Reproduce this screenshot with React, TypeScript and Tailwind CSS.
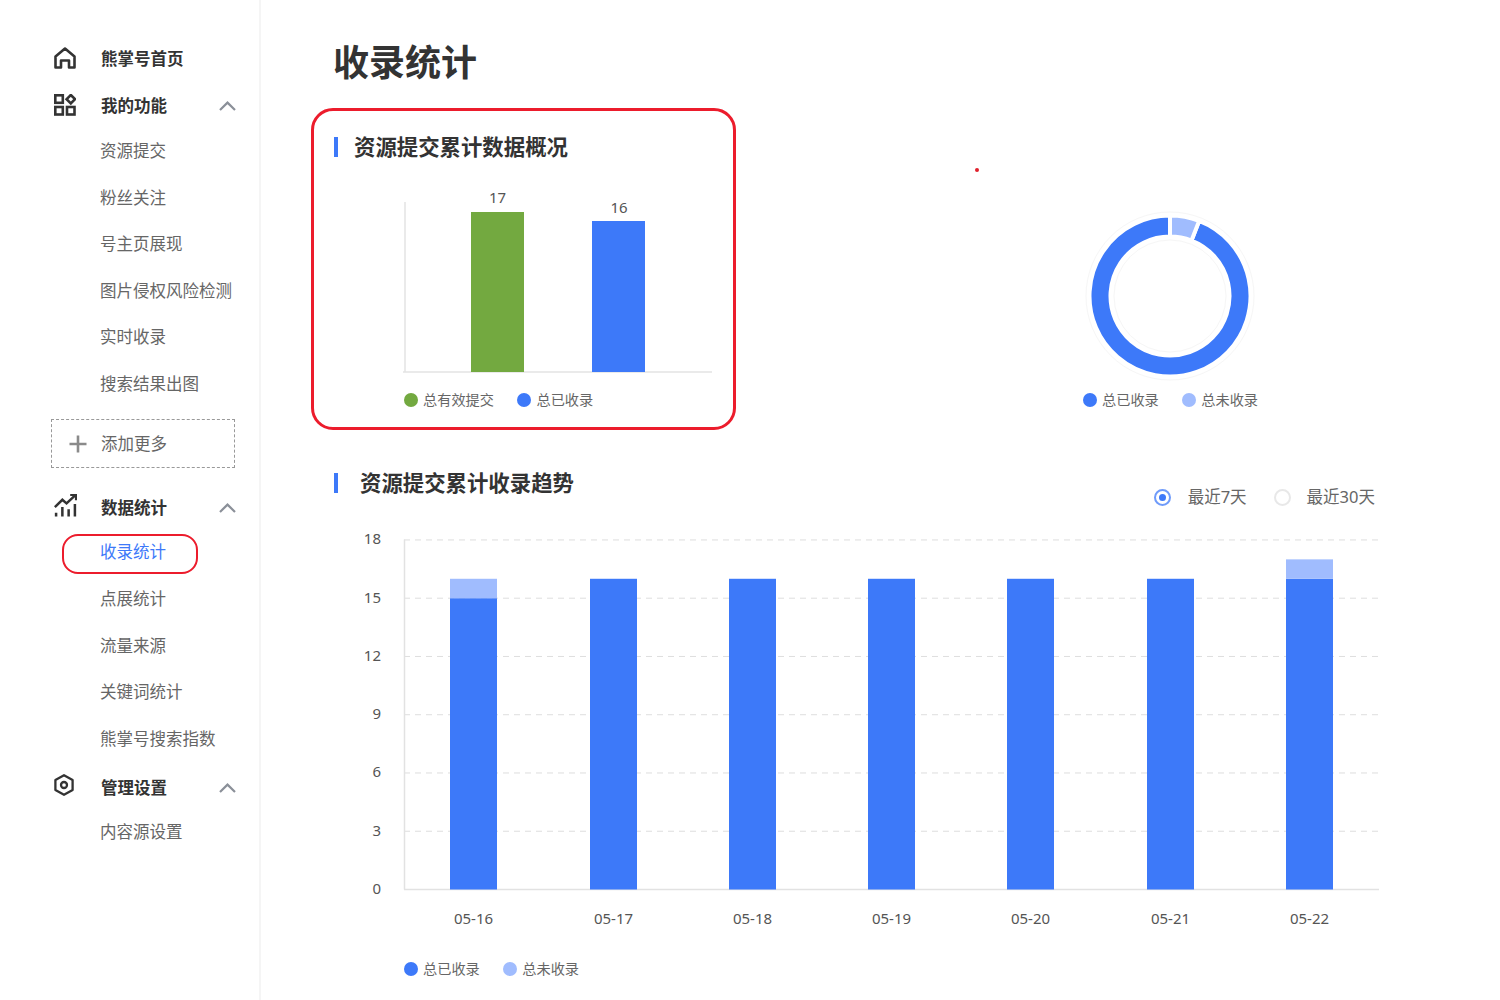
import React from 'react';

const BLUE = '#3d79f9';
const PALE = '#a0bcfe';
const GREEN = '#73a940';

const HomeIcon = () => (
    <svg width="22" height="22" viewBox="0 0 22 22" fill="none" stroke="#333" strokeWidth="2.600" strokeLinejoin="round">
        <path d="M1.500 9.500 11 1.500l9.500 8V20.500h-5.500v-7H7v7H1.500z" />
    </svg>
);

const GridIcon = () => (
    <svg width="22" height="22" viewBox="0 0 22 22" fill="none" stroke="#333" strokeWidth="2.600">
        <rect x="1.300" y="1.300" width="7.500" height="7.500" />
        <rect x="1.300" y="13" width="7.500" height="7.500" />
        <rect x="13" y="13" width="7.500" height="7.500" />
        <path d="M16.800 1 21 5.200l-4.200 4.200-4.200-4.200z" />
    </svg>
);

const ChartIcon = () => (
    <svg width="23" height="23" viewBox="0 0 22 22" fill="none" stroke="#333" strokeWidth="2.400">
        <path d="M.8 12.500 8 5.500l4 3.500L20.500 1" />
        <path d="M15.500 1h5.500v5" strokeWidth="2" />
        <path d="M2 21.500v-3.500M8 21.500v-9M14 21.500v-7M20 21.500v-12" />
    </svg>
);

const HexIcon = () => (
    <svg width="20" height="22" viewBox="0 0 20 22" fill="none" stroke="#333" strokeWidth="2.300">
        <path d="M10 1.200 18.600 6v10L10 20.800 1.400 16V6z" strokeLinejoin="round" />
        <circle cx="10" cy="11" r="3" />
    </svg>
);

const Chevron = () => (
    <svg width="17" height="10" viewBox="0 0 17 10" fill="none" stroke="#8b9099" strokeWidth="2.200" className="ml-auto -mt-[2px]">
        <path d="M1 9 8.500 1.600 16 9" />
    </svg>
);

const PlusIcon = () => (
    <svg width="18" height="18" viewBox="0 0 18 18" fill="none" stroke="#8a8a8a" strokeWidth="2.600">
        <path d="M9 .5v17M.5 9h17" />
    </svg>
);

const GroupRow = ({ icon, iconClass, label, chevron, className }: { icon: React.ReactNode; iconClass: string; label: string; chevron?: boolean; className: string }) => (
    <div className={`flex items-center pl-[54px] pr-[23px] ${className}`}>
        <div className={`w-[47px] shrink-0 flex items-center ${iconClass}`}>{icon}</div>
        <span className="text-[16.500px] font-bold text-[#333]">{label}</span>
        {chevron && <Chevron />}
    </div>
);

const SubRow = ({ label, active }: { label: string; active?: boolean }) => (
    <div className="relative h-[46.600px] flex items-center pl-[100px]">
        {active && <div className="absolute left-[62px] top-[4px] w-[136px] h-[40px] border-2 border-[#ec1c2c] rounded-[16px]" />}
        <span className={`text-[16.500px] ${active ? 'text-[#3d79f9]' : 'text-[#666]'}`}>{label}</span>
    </div>
);

const Sidebar = () => (
    <aside className="w-[261px] shrink-0 h-full border-r-2 border-[#f5f5f5] pt-[36px]">
        <GroupRow icon={<HomeIcon />} iconClass="-mt-[3px]" label="熊掌号首页" className="h-[46px]" />
        <GroupRow icon={<GridIcon />} iconClass="-mt-[4px]" label="我的功能" chevron className="h-[44px] mt-[2px] pt-[1px]" />
        {['资源提交', '粉丝关注', '号主页展现', '图片侵权风险检测', '实时收录', '搜索结果出图'].map(s => <SubRow key={s} label={s} />)}
        <div className="ml-[51px] w-[184px] h-[49px] mt-[11px] pt-[2px] border border-dashed border-[#999] flex items-center pl-[17px] gap-[14px]">
            <PlusIcon />
            <span className="text-[16.500px] text-[#666]">添加更多</span>
        </div>
        <GroupRow icon={<ChartIcon />} iconClass="-mt-[6px]" label="数据统计" chevron className="h-[44px] mt-[18px] pt-[2px]" />
        <SubRow label="收录统计" active />
        {['点展统计', '流量来源', '关键词统计', '熊掌号搜索指数'].map(s => <SubRow key={s} label={s} />)}
        <GroupRow icon={<HexIcon />} iconClass="-mt-[8px]" label="管理设置" chevron className="h-[44px] mt-[3px] pt-[2px]" />
        <SubRow label="内容源设置" />
    </aside>
);

const SectionTitle = ({ label, gap }: { label: string; gap: string }) => (
    <div className={`flex items-center h-[20px] ${gap}`}>
        <div className="w-[4px] h-[20px] bg-[#3d79f9]" />
        <h2 className="text-[21.400px] font-bold text-[#333] whitespace-nowrap">{label}</h2>
    </div>
);

const Legend = ({ items, className }: { items: { color: string; label: string }[]; className: string }) => (
    <div className={`flex items-center h-[14px] gap-[23.500px] ${className}`}>
        {items.map(i => (
            <div key={i.label} className="flex items-center gap-[5px]">
                <span className="w-[14px] h-[14px] rounded-full" style={{ backgroundColor: i.color }} />
                <span className="text-[14.200px] text-[#666] whitespace-nowrap">{i.label}</span>
            </div>
        ))}
    </div>
);

const OverviewCard = () => (
    <div className="w-[425px] h-[322px] -ml-px shrink-0 border-[3px] border-[#ec1c2c] rounded-[22px] pl-[20px] pt-[26px]">
        <SectionTitle label="资源提交累计数据概况" gap="gap-[16px]" />
        <svg width="330" height="196" viewBox="0 0 330 196" className="mt-[29px] ml-[68px] block">
            <path d="M3 16V186M1 186H310" stroke="#e4e4e4" strokeWidth="1.500" fill="none" />
            <rect x="69" y="26" width="53" height="160" fill={GREEN} />
            <rect x="190" y="35" width="53" height="151" fill={BLUE} />
            <text x="95.500" y="17" textAnchor="middle" fontSize="15" fill="#555">17</text>
            <text x="217" y="27" textAnchor="middle" fontSize="15" fill="#555">16</text>
        </svg>
        <Legend
            className="ml-[70px] mt-[11px]"
            items={[{ color: GREEN, label: '总有效提交' }, { color: BLUE, label: '总已收录' }]}
        />
    </div>
);

// annular sector, angles in degrees clockwise from 12 o'clock
const sector = (from: number, to: number, r1: number, r2: number) => {
    const pt = (r: number, a: number) => {
        const rad = (a * Math.PI) / 180;
        return `${90 + r * Math.sin(rad)} ${90 - r * Math.cos(rad)}`;
    };
    const large = to - from > 180 ? 1 : 0;
    return `M${pt(r2, from)}A${r2} ${r2} 0 ${large} 1 ${pt(r2, to)}L${pt(r1, to)}A${r1} ${r1} 0 ${large} 0 ${pt(r1, from)}Z`;
};

const DonutPanel = () => (
    <div className="relative flex-1 h-[322px] pt-[98px] pl-[344px]">
        <div className="absolute left-[239px] top-[60px] w-[4px] h-[4px] rounded-full bg-[#e0202c]" />
        <svg width="180" height="180" viewBox="0 0 180 180" className="block">
            <path d={sector(21.200, 360, 59.500, 80.500)} fill={BLUE} stroke="#fff" strokeWidth="4" />
            <path d={sector(0, 21.200, 59.500, 80.500)} fill={PALE} stroke="#fff" strokeWidth="4" />
            <circle cx="90" cy="90" r="84" fill="none" stroke="#f6f6f6" />
            <circle cx="90" cy="90" r="56" fill="none" stroke="#f6f6f6" />
        </svg>
        <Legend
            className="ml-[3px] mt-[7px]"
            items={[{ color: BLUE, label: '总已收录' }, { color: PALE, label: '总未收录' }]}
        />
    </div>
);

const trendBars = [
    { x: 90, label: '05-16', solid: 15, pale: 1 },
    { x: 230, label: '05-17', solid: 16, pale: 0 },
    { x: 369, label: '05-18', solid: 16, pale: 0 },
    { x: 508, label: '05-19', solid: 16, pale: 0 },
    { x: 647, label: '05-20', solid: 16, pale: 0 },
    { x: 787, label: '05-21', solid: 16, pale: 0 },
    { x: 926, label: '05-22', solid: 16, pale: 1 },
];

const UNIT = 19.42;
const BASE = 359.500;

const TrendChart = () => (
    <svg width="1030" height="412" viewBox="0 -12 1030 412" className="block mt-[11px] ml-[48px]">
        {[18, 15, 12, 9, 6, 3].map(v => (
            <line key={v} x1="44" x2="1019" y1={BASE - v * UNIT} y2={BASE - v * UNIT} stroke="#dedede" strokeDasharray="6 5" />
        ))}
        {[18, 15, 12, 9, 6, 3, 0].map(v => (
            <text key={v} x="21" y={BASE - v * UNIT + 4.500} textAnchor="end" fontSize="15" fill="#555">{v}</text>
        ))}
        <path d={`M44.500 ${BASE - 350}V${BASE}M44 ${BASE}H1019`} stroke="#e2e2e2" strokeWidth="1.500" fill="none" />
        {trendBars.map(b => (
            <g key={b.label}>
                <rect x={b.x} y={BASE - b.solid * UNIT} width="47" height={b.solid * UNIT} fill={BLUE} />
                {b.pale > 0 && <rect x={b.x} y={BASE - (b.solid + b.pale) * UNIT} width="47" height={b.pale * UNIT} fill={PALE} />}
                <text x={b.x + 23.500} y="394" textAnchor="middle" fontSize="15" fill="#555">{b.label}</text>
            </g>
        ))}
    </svg>
);

const RangeRadios = () => (
    <div className="ml-auto mt-[14px] flex items-center h-[20px] text-[16.500px] text-[#666]">
        <span className="w-[17px] h-[17px] rounded-full border-2 border-[#6f9bfa] flex items-center justify-center">
            <span className="w-[7px] h-[7px] rounded-full bg-[#3d79f9]" />
        </span>
        <span className="ml-[17px]">最近7天</span>
        <span className="ml-[27px] w-[17px] h-[17px] rounded-full border-2 border-[#e8e8e8]" />
        <span className="ml-[16px]">最近30天</span>
    </div>
);

const App: React.FC = () => {
    return (
        <div className="flex h-[1000px] w-[1500px] overflow-hidden bg-white font-['Noto_Sans','Noto_Sans_CJK_SC',sans-serif]">
            <Sidebar />
            <main className="flex-1 min-w-0 pl-[51px] pr-[125px] pt-[36px]">
                <h1 className="ml-[21px] h-[54px] flex items-center text-[36px] font-bold text-[#333]">收录统计</h1>
                <div className="flex mt-[18px] -mr-[125px]">
                    <OverviewCard />
                    <DonutPanel />
                </div>
                <div className="flex items-start ml-[22px] mt-[43px]">
                    <SectionTitle label="资源提交累计收录趋势" gap="gap-[22px]" />
                    <RangeRadios />
                </div>
                <TrendChart />
                <Legend
                    className="ml-[92px] mt-[32px]"
                    items={[{ color: BLUE, label: '总已收录' }, { color: PALE, label: '总未收录' }]}
                />
            </main>
        </div>
    );
};

export default App;
